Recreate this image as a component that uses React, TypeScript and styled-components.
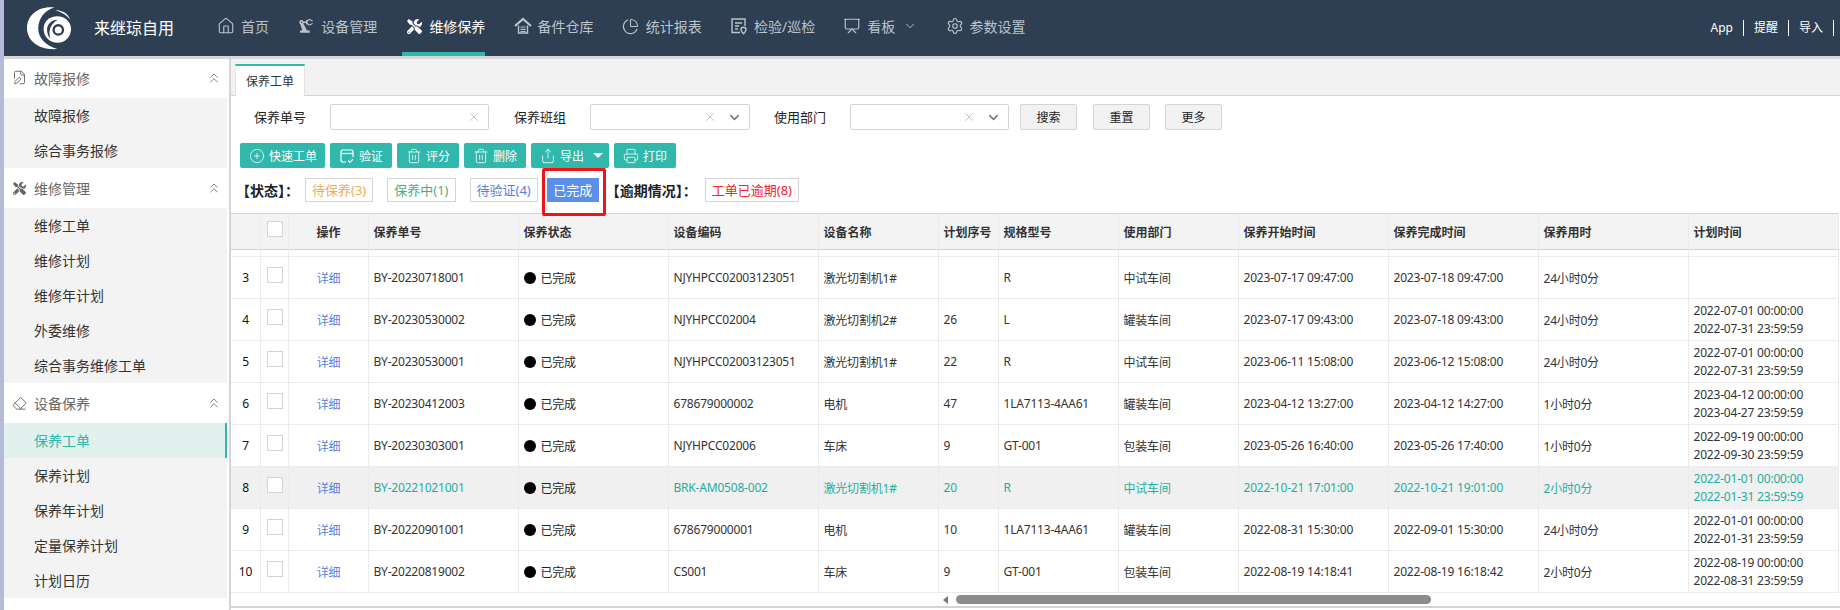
import { FC, ReactNode } from "react";
import styled, { createGlobalStyle } from "styled-components";
import {
    ChartPie, ChevronDown, ChevronsUp, CirclePlus, Eraser, FilePen, House,
    Presentation, Printer, Settings, Share, Trash2, X,
} from "lucide-react";
import { FaTools } from "react-icons/fa";
import { MdPrecisionManufacturing } from "react-icons/md";

interface IRow {
    no: number;
    order: string;
    code: string;
    name: string;
    seq: string;
    model: string;
    dept: string;
    start: string;
    end: string;
    used: string;
    plan: string[];
    selected?: boolean;
}

const rows: IRow[] = [
    { no: 3, order: "BY-20230718001", code: "NJYHPCC02003123051", name: "激光切割机1#", seq: "", model: "R", dept: "中试车间", start: "2023-07-17 09:47:00", end: "2023-07-18 09:47:00", used: "24小时0分", plan: [] },
    { no: 4, order: "BY-20230530002", code: "NJYHPCC02004", name: "激光切割机2#", seq: "26", model: "L", dept: "罐装车间", start: "2023-07-17 09:43:00", end: "2023-07-18 09:43:00", used: "24小时0分", plan: ["2022-07-01 00:00:00", "2022-07-31 23:59:59"] },
    { no: 5, order: "BY-20230530001", code: "NJYHPCC02003123051", name: "激光切割机1#", seq: "22", model: "R", dept: "中试车间", start: "2023-06-11 15:08:00", end: "2023-06-12 15:08:00", used: "24小时0分", plan: ["2022-07-01 00:00:00", "2022-07-31 23:59:59"] },
    { no: 6, order: "BY-20230412003", code: "678679000002", name: "电机", seq: "47", model: "1LA7113-4AA61", dept: "罐装车间", start: "2023-04-12 13:27:00", end: "2023-04-12 14:27:00", used: "1小时0分", plan: ["2023-04-12 00:00:00", "2023-04-27 23:59:59"] },
    { no: 7, order: "BY-20230303001", code: "NJYHPCC02006", name: "车床", seq: "9", model: "GT-001", dept: "包装车间", start: "2023-05-26 16:40:00", end: "2023-05-26 17:40:00", used: "1小时0分", plan: ["2022-09-19 00:00:00", "2022-09-30 23:59:59"] },
    { no: 8, order: "BY-20221021001", code: "BRK-AM0508-002", name: "激光切割机1#", seq: "20", model: "R", dept: "中试车间", start: "2022-10-21 17:01:00", end: "2022-10-21 19:01:00", used: "2小时0分", plan: ["2022-01-01 00:00:00", "2022-01-31 23:59:59"], selected: true },
    { no: 9, order: "BY-20220901001", code: "678679000001", name: "电机", seq: "10", model: "1LA7113-4AA61", dept: "罐装车间", start: "2022-08-31 15:30:00", end: "2022-09-01 15:30:00", used: "24小时0分", plan: ["2022-01-01 00:00:00", "2022-01-31 23:59:59"] },
    { no: 10, order: "BY-20220819002", code: "CS001", name: "车床", seq: "9", model: "GT-001", dept: "包装车间", start: "2022-08-19 14:18:41", end: "2022-08-19 16:18:42", used: "2小时0分", plan: ["2022-08-19 00:00:00", "2022-08-31 23:59:59"] },
];

const colWidths = [30, 28, 80, 150, 150, 150, 120, 60, 120, 120, 150, 150, 150, 150];
const headers = ["保养单号", "保养状态", "设备编码", "设备名称", "计划序号", "规格型号", "使用部门", "保养开始时间", "保养完成时间", "保养用时", "计划时间"];

const sideMenu = [
    { title: "故障报修", icon: <FilePen size={15} strokeWidth={1.5} />, items: ["故障报修", "综合事务报修"] },
    { title: "维修管理", icon: <FaTools size={13} />, items: ["维修工单", "维修计划", "维修年计划", "外委维修", "综合事务维修工单"] },
    { title: "设备保养", icon: <Eraser size={15} strokeWidth={1.5} />, items: ["保养工单", "保养计划", "保养年计划", "定量保养计划", "计划日历"] },
];

const Logo: FC = () => (
    <LogoSvg viewBox="0 0 46 44">
        <path d="M28 1C12-1 0 9 0 22c0 13 12 23 31 21.500C19 40 11.500 32 11.500 23 11.500 12 18 4 28 1Z" fill="#fff" />
        <path d="M29 3.500c8 .5 13 4 15 9.500-3.500-4-8-7-15-9.500Z" fill="#fff" />
        <path d="M17 23c0-8 6-13 14-13 8 0 14 6 14 13 0 8-6 14-13.500 14C23 37 17 31 17 23Z" fill="#fff" />
        <path d="M31.500 13.500C25 13.500 20.500 18 20.500 24c0 3.500 1.300 6.500 3.500 9-1-3-1.300-6-.8-8.800.8-4.700 4-8.200 8.300-10.700Z" fill="#2e3f53" />
        <circle cx="32" cy="24" r="4.800" fill="none" stroke="#2e3f53" strokeWidth="2.400" />
    </LogoSvg>
);

const StoreIcon: FC = () => (
    <svg width="18" height="18" viewBox="0 0 18 18" fill="none" stroke="currentColor">
        <path d="M1 9l8-7 8 7" strokeWidth="2.200" />
        <path d="M4.500 8.500V16h9V8.500" strokeWidth="1.400" />
        <path d="M6.500 10h5M6.500 12.300h5M6.500 14.500h5" strokeWidth="1.200" />
    </svg>
);

const InspectIcon: FC = () => (
    <svg width="18" height="18" viewBox="0 0 18 18" fill="none" stroke="currentColor" strokeWidth="1.400">
        <path d="M10 15.500H2V2h13v7" />
        <path d="M5 6h7M5 9h4M5 12h3" />
        <path d="M13.500 16.800c-1.600-1.700-2.500-2.800-2.500-4a2.500 2.500 0 0 1 5 0c0 1.200-.9 2.300-2.500 4Z" />
    </svg>
);

const VerifyIcon: FC = () => (
    <svg width="16" height="16" viewBox="0 0 16 16" fill="none" stroke="currentColor" strokeWidth="1.200">
        <path d="M7 14H3.500A1.500 1.500 0 0 1 2 12.500v-9A1.500 1.500 0 0 1 3.500 2h9A1.500 1.500 0 0 1 14 3.500V9" />
        <path d="M2 5.500h12" />
        <path d="M9 12.500l1.800 1.800 3.200-3" />
    </svg>
);

const navItems: { label: string; icon: ReactNode; active?: boolean; caret?: boolean }[] = [
    { label: "首页", icon: <House size={18} strokeWidth={1.5} /> },
    { label: "设备管理", icon: <MdPrecisionManufacturing size={18} /> },
    { label: "维修保养", icon: <FaTools size={15} />, active: true },
    { label: "备件仓库", icon: <StoreIcon /> },
    { label: "统计报表", icon: <ChartPie size={17} strokeWidth={1.5} /> },
    { label: "检验/巡检", icon: <InspectIcon /> },
    { label: "看板", icon: <Presentation size={18} strokeWidth={1.5} />, caret: true },
    { label: "参数设置", icon: <Settings size={18} strokeWidth={1.5} /> },
];

const toolButtons = [
    { label: "快速工单", w: 85, icon: <CirclePlus size={16} strokeWidth={1.2} /> },
    { label: "验证", w: 62, icon: <VerifyIcon /> },
    { label: "评分", w: 62, icon: <Trash2 size={16} strokeWidth={1.2} /> },
    { label: "删除", w: 62, icon: <Trash2 size={16} strokeWidth={1.2} /> },
];

const App: FC = () => {
    return (
        <Page>
            <GlobalStyle />
            <TopBar>
                <Brand>
                    <Logo />
                    <BrandName>来继琼自用</BrandName>
                </Brand>
                <Nav>
                    {navItems.map((item) => (
                        <NavItem key={item.label} $active={item.active}>
                            <NavIcon>{item.icon}</NavIcon>
                            {item.label}
                            {item.caret && <NavCaret><ChevronDown size={14} strokeWidth={1.6} /></NavCaret>}
                        </NavItem>
                    ))}
                </Nav>
                <TopLinks>
                    <TopLink>App</TopLink>
                    <TopLink>提醒</TopLink>
                    <TopLink>导入</TopLink>
                </TopLinks>
            </TopBar>
            <Body>
                <Sidebar>
                    {sideMenu.map((group) => (
                        <SideGroup key={group.title}>
                            <SideHeader>
                                <SideIcon>{group.icon}</SideIcon>
                                <SideTitle>{group.title}</SideTitle>
                                <ChevronsUp size={16} strokeWidth={1.2} />
                            </SideHeader>
                            {group.items.map((label) => (
                                <SideItem key={label} $active={label === "保养工单"}>{label}</SideItem>
                            ))}
                        </SideGroup>
                    ))}
                </Sidebar>
                <Content>
                    <TabBar>
                        <Tab>保养工单</Tab>
                    </TabBar>
                    <FilterRow>
                        <Field $gap={25}>
                            <FieldLabel>保养单号</FieldLabel>
                            <FieldInput $w={159}><X size={14} strokeWidth={1.2} /></FieldInput>
                        </Field>
                        <Field $gap={24}>
                            <FieldLabel>保养班组</FieldLabel>
                            <FieldInput $w={160}>
                                <X size={14} strokeWidth={1.2} />
                                <ChevronDown size={15} strokeWidth={2.4} />
                            </FieldInput>
                        </Field>
                        <Field $gap={11}>
                            <FieldLabel>使用部门</FieldLabel>
                            <FieldInput $w={159}>
                                <X size={14} strokeWidth={1.2} />
                                <ChevronDown size={15} strokeWidth={2.4} />
                            </FieldInput>
                        </Field>
                        <PlainButton>搜索</PlainButton>
                        <PlainButton>重置</PlainButton>
                        <PlainButton>更多</PlainButton>
                    </FilterRow>
                    <Toolbar>
                        {toolButtons.map((btn) => (
                            <ToolButton key={btn.label} $w={btn.w}>{btn.icon}{btn.label}</ToolButton>
                        ))}
                        <ToolButton $w={78}>
                            <Share size={16} strokeWidth={1.2} />导出<ToolCaret />
                        </ToolButton>
                        <ToolButton $w={62}><Printer size={16} strokeWidth={1.2} />打印</ToolButton>
                    </Toolbar>
                    <StatusRow>
                        <StatusLabel $left={0} $right={-8}>【状态】：</StatusLabel>
                        <StatusTag $color="#f0ad4e">待保养(3)</StatusTag>
                        <StatusTag $color="#4cae7f">保养中(1)</StatusTag>
                        <StatusTag $color="#5b7fe0">待验证(4)</StatusTag>
                        <Highlighted>
                            <ActiveTag>已完成</ActiveTag>
                        </Highlighted>
                        <StatusLabel $left={-7} $right={-6}>【逾期情况】：</StatusLabel>
                        <StatusTag $color="#f5222d">工单已逾期(8)</StatusTag>
                    </StatusRow>
                    <Table>
                        <colgroup>
                            {colWidths.map((w, i) => <col key={i} width={w} />)}
                        </colgroup>
                        <thead>
                            <tr>
                                <HeadCell />
                                <HeadCell><CheckBox /></HeadCell>
                                <HeadCell $center>操作</HeadCell>
                                {headers.map((h) => <HeadCell key={h}>{h}</HeadCell>)}
                            </tr>
                        </thead>
                        <tbody>
                            <tr>
                                {colWidths.map((_, i) => <SpacerCell key={i} />)}
                            </tr>
                            {rows.map((row) => (
                                <Row key={row.no} $selected={row.selected}>
                                    <NoCell>{row.no}</NoCell>
                                    <Cell><CheckBox /></Cell>
                                    <Cell $center><DetailLink>详细</DetailLink></Cell>
                                    <Cell>{row.order}</Cell>
                                    <StatusCell>
                                        <StatusInner><Dot />已完成</StatusInner>
                                    </StatusCell>
                                    <Cell>{row.code}</Cell>
                                    <Cell>{row.name}</Cell>
                                    <Cell>{row.seq}</Cell>
                                    <Cell>{row.model}</Cell>
                                    <Cell>{row.dept}</Cell>
                                    <Cell>{row.start}</Cell>
                                    <Cell>{row.end}</Cell>
                                    <Cell>{row.used}</Cell>
                                    <Cell>{row.plan.map((p) => <PlanLine key={p}>{p}</PlanLine>)}</Cell>
                                </Row>
                            ))}
                        </tbody>
                    </Table>
                    <ScrollTrack>
                        <ScrollArrow />
                        <ScrollThumb />
                    </ScrollTrack>
                </Content>
            </Body>
        </Page>
    );
};

export default App;

const GlobalStyle = createGlobalStyle`
html, body {
    margin: 0;
    padding: 0;
    background: #fff;
}
* {
    box-sizing: border-box;
}
body {
    font-family: "Noto Sans", "Noto Sans CJK SC", sans-serif;
    font-size: 12px;
    color: #333;
}
`
const Page = styled.div`
width: 1840px;
height: 610px;
overflow: hidden;
border-left: 4px solid #b5bad9;
display: flex;
flex-direction: column;
background: #fff;
`
const TopBar = styled.header`
flex: 0 0 59px;
display: flex;
align-items: stretch;
height: 59px;
background: #2e3f53;
border-bottom: 3px solid #d6d6d6;
`
const Brand = styled.div`
display: flex;
align-items: center;
width: 210px;
padding-left: 23px;
flex: none;
`
const LogoSvg = styled.svg`
width: 45px;
height: 44px;
flex: none;
`
const BrandName = styled.div`
margin-left: 22px;
font-size: 16px;
color: #fff;
margin-top: -2px;
`
const Nav = styled.nav`
display: flex;
align-items: stretch;
gap: 25.2px;
flex: 1;
`
const NavItem = styled.div<{ $active?: boolean }>`
position: relative;
display: flex;
align-items: center;
gap: 6px;
padding: 0 0 4px 3px;
font-size: 14px;
white-space: nowrap;
color: ${(p) => (p.$active ? "#fff" : "#bcc3cb")};
${(p) => p.$active && "border-bottom: 4px solid #2fb8ab; padding-bottom: 0;"}
`
const NavIcon = styled.span`
display: flex;
width: 18px;
justify-content: center;
`
const NavCaret = styled.span`
display: flex;
margin-left: 2px;
`
const TopLinks = styled.div`
display: flex;
align-items: center;
padding-right: 6px;
`
const TopLink = styled.span`
height: 16px;
line-height: 16px;
padding: 0 10px;
font-size: 12px;
color: #fff;
border-right: 1px solid #fff;
`
const Body = styled.div`
flex: 1;
display: flex;
min-height: 0;
`
const Sidebar = styled.aside`
flex: none;
width: 227px;
padding-right: 2px;
border-right: 2px solid #d4d4d4;
background: #fff;
`
const SideHeader = styled.div`
display: flex;
align-items: center;
height: 40px;
padding: 0 5px 0 7px;
color: #666;
font-size: 14px;
`
const SideGroup = styled.div`
&:first-child ${SideHeader} {
    height: 39px;
    padding-bottom: 2px;
}
`
const SideIcon = styled.span`
display: flex;
width: 16px;
justify-content: center;
`
const SideTitle = styled.span`
flex: 1;
margin-left: 7px;
`
const SideItem = styled.div<{ $active?: boolean }>`
height: 35px;
line-height: 35px;
padding-left: 30px;
font-size: 14px;
color: ${(p) => (p.$active ? "#2fb8ab" : "#333")};
background: ${(p) => (p.$active ? "#e2f0ee" : "#f3f3f3")};
border-right: 2px solid ${(p) => (p.$active ? "#2fb8ab" : "#f3f3f3")};
`
const Content = styled.main`
flex: 1;
min-width: 0;
display: flex;
flex-direction: column;
`
const TabBar = styled.div`
display: flex;
align-items: flex-end;
height: 37px;
padding-left: 4px;
background: #f2f2f2;
border-bottom: 1px solid #d4d4d4;
`
const Tab = styled.div`
width: 70px;
height: 32px;
margin-bottom: -1px;
text-align: center;
line-height: 31px;
font-size: 12px;
background: #fff;
border: 1px solid #e4e4e4;
border-top: 2px solid #2fb8ab;
border-bottom: none;
`
const FilterRow = styled.div`
display: flex;
align-items: center;
margin-top: 8px;
padding-left: 23px;
`
const Field = styled.div<{ $gap: number }>`
display: flex;
align-items: center;
gap: 24px;
margin-right: ${(p) => p.$gap}px;
`
const FieldLabel = styled.span`
margin-top: -2px;
font-size: 13px;
color: #222;
`
const FieldInput = styled.div<{ $w: number }>`
display: flex;
align-items: center;
justify-content: flex-end;
gap: 10px;
width: ${(p) => p.$w}px;
height: 26px;
padding-right: 7px;
border: 1px solid #d4d4d4;
border-radius: 2px;
background: #fff;
color: #aaa;
svg:last-child:not(:first-child) {
    color: #777;
}
`
const PlainButton = styled.button`
width: 57px;
height: 26px;
margin-right: 15px;
padding: 0;
font: inherit;
color: #222;
background: #f2f2f2;
border: 1px solid #d4d4d4;
border-radius: 2px;
&:first-of-type {
    margin-right: 16px;
}
`
const Toolbar = styled.div`
display: flex;
gap: 5px;
margin-top: 13px;
padding-left: 9px;
`
const ToolButton = styled.button<{ $w: number }>`
display: flex;
align-items: center;
gap: 4px;
width: ${(p) => p.$w}px;
height: 25px;
padding: 0 0 0 9px;
font: inherit;
color: #fff;
background: #2fb8ab;
border: none;
border-radius: 2px;
`
const ToolCaret = styled.span`
width: 0;
height: 0;
margin-left: 5px;
border-left: 5px solid transparent;
border-right: 5px solid transparent;
border-top: 5px solid #fff;
`
const StatusRow = styled.div`
display: flex;
align-items: center;
gap: 14px;
height: 24px;
margin-top: 10px;
padding-left: 5px;
`
const StatusLabel = styled.span<{ $left: number; $right: number }>`
margin: 0 ${(p) => p.$right}px 0 ${(p) => p.$left}px;
font-size: 14px;
font-weight: 700;
color: #222;
`
const StatusTag = styled.span<{ $color: string }>`
height: 24px;
line-height: 22px;
padding: 0 6px;
font-size: 13px;
color: ${(p) => p.$color};
border: 1px solid #d4d4d4;
`
const Highlighted = styled.div`
position: relative;
margin-left: -5px;
&::after {
    content: "";
    position: absolute;
    top: -10px;
    bottom: -14px;
    left: -5px;
    right: -7px;
    border: 3px solid #f01414;
    border-radius: 2px;
}
`
const ActiveTag = styled.div`
width: 52px;
height: 24px;
line-height: 24px;
text-align: center;
font-size: 13px;
color: #fff;
background: #5b8fe8;
`
const Table = styled.table`
width: 1608px;
margin-top: 11px;
table-layout: fixed;
border-collapse: separate;
border-spacing: 0;
flex: none;
`
const HeadCell = styled.th<{ $center?: boolean }>`
height: 37px;
padding: 0 4.5px;
font-size: 12px;
font-weight: 700;
color: #333;
text-align: ${(p) => (p.$center ? "center" : "left")};
white-space: nowrap;
background: #f3f3f3;
border-top: 1px solid #d4d4d4;
border-bottom: 1px solid #d4d4d4;
border-right: 1px solid #ebebeb;
`
const SpacerCell = styled.td`
height: 7px;
padding: 0;
border-right: 1px solid #ebebeb;
border-bottom: 1px solid #ebebeb;
`
const Row = styled.tr<{ $selected?: boolean }>`
background: ${(p) => (p.$selected ? "#f0f0f0" : "#fff")};
color: ${(p) => (p.$selected ? "#1fae9f" : "#333")};
`
const Cell = styled.td<{ $center?: boolean }>`
height: 42px;
padding: 0 4.5px;
text-align: ${(p) => (p.$center ? "center" : "left")};
white-space: nowrap;
letter-spacing: -0.2px;
border-right: 1px solid #ebebeb;
border-bottom: 1px solid #ebebeb;
`
const NoCell = styled(Cell)`
text-align: center;
color: #111;
`
const StatusCell = styled(Cell)`
color: #222;
`
const StatusInner = styled.span`
display: flex;
align-items: center;
gap: 5px;
`
const Dot = styled.i`
width: 12px;
height: 12px;
border-radius: 50%;
background: #000;
`
const CheckBox = styled.span`
display: block;
width: 16px;
height: 16px;
margin: -6px 0 0 1px;
background: #fff;
border: 1px solid #d4d4d4;
`
const DetailLink = styled.a`
color: #5b7fe0;
`
const PlanLine = styled.div`
line-height: 18px;
`
const ScrollTrack = styled.div`
display: flex;
align-items: center;
height: 15px;
padding-left: 712px;
border-bottom: 2px solid #d4d4d4;
flex: none;
`
const ScrollArrow = styled.span`
width: 0;
height: 0;
margin-right: 8px;
border-top: 4px solid transparent;
border-bottom: 4px solid transparent;
border-right: 5px solid #777;
`
const ScrollThumb = styled.span`
width: 475px;
height: 9px;
border-radius: 5px;
background: #8c8c8c;
`
